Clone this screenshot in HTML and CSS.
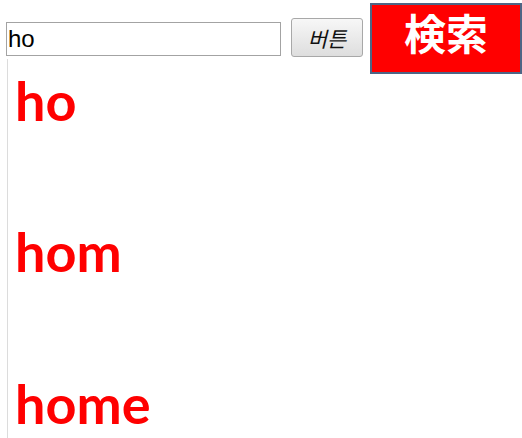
FILE: index.html
```html
<!DOCTYPE html>
<html lang="ko">
<head>
<meta charset="utf-8">
<title>Search</title>
<link rel="stylesheet" href="styles.css">
</head>
<body>
<div class="page">
  <div class="toolbar">
    <input class="search-input" type="text" value="ho">
    <button class="btn" type="button">버튼</button>
    <div class="search-box">検索</div>
  </div>
  <div class="results">
    <div class="item">ho</div>
    <div class="item">hom</div>
    <div class="item">home</div>
  </div>
</div>
</body>
</html>
```
FILE: styles.css
```css
html, body {
  margin: 0;
  padding: 0;
  background: #ffffff;
  overflow: hidden;
}
.page {
  width: 522px;
  height: 438px;
  padding: 3px 0 0 6px;
  box-sizing: border-box;
  overflow: hidden;
}
.toolbar {
  display: flex;
  align-items: center;
  height: 71px;
}
.search-input {
  box-sizing: border-box;
  width: 275px;
  height: 34px;
  margin: 0 10px 0 0;
  padding: 0 0 0 1px;
  border: 1px solid #a3a3a3;
  font-family: "Liberation Sans", Arial, sans-serif;
  font-size: 24px;
  color: #000;
  background: #fff;
  outline: none;
}
.btn {
  box-sizing: border-box;
  width: 72px;
  height: 39px;
  margin: -2px 7px 0 0;
  padding: 0;
  border: 1px solid #a8a8a8;
  border-radius: 3px;
  background: linear-gradient(#f7f7f7, #dedede);
  font-family: "Noto Sans CJK KR", sans-serif;
  font-style: italic;
  font-size: 21px;
  color: #111;
}
.search-box {
  box-sizing: border-box;
  width: 152px;
  height: 71px;
  border: 2px solid #4e6585;
  background: #ff0000;
  color: #ffffff;
  font-family: "Noto Sans CJK JP", sans-serif;
  font-weight: 700;
  font-size: 42px;
  line-height: 1;
  display: flex;
  align-items: center;
  justify-content: center;
  padding-bottom: 14px;
}
.results {
  margin: -15px 0 0 1px;
  padding: 10px 0 0 7px;
  border-left: 1px solid #dcdcdc;
  height: 400px;
}
.item {
  font-family: Lato, sans-serif;
  font-weight: 700;
  font-size: 54px;
  line-height: 1.2;
  color: #ff0000;
  margin-bottom: 86.5px;
}
```
